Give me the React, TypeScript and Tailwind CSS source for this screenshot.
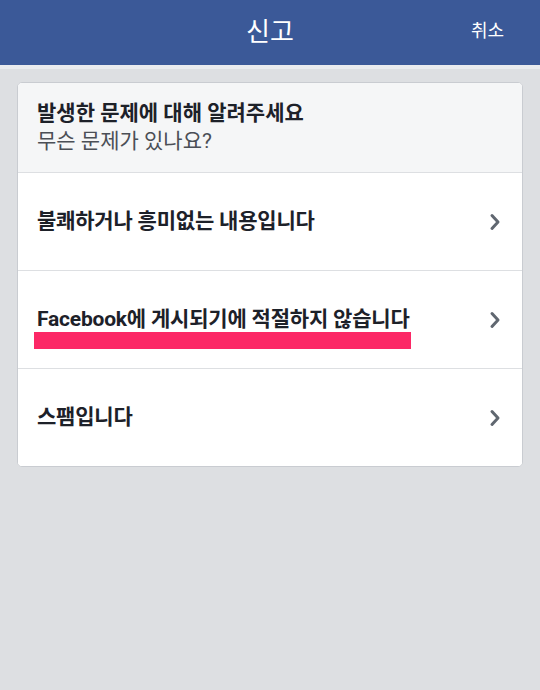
import React from 'react'

const font = { fontFamily: 'Roboto, "Noto Sans CJK KR", "Noto Sans", sans-serif' }

function Chevron() {
  return (
    <svg width="14" height="20" viewBox="0 0 14 20" className="shrink-0">
      <path d="M4 3.5 L10 10 L4 16.5" fill="none" stroke="#606770" strokeWidth="3" strokeLinecap="round" strokeLinejoin="round" />
    </svg>
  )
}

function Row({ label, mark, last }: { label: string; mark?: boolean; last?: boolean }) {
  return (
    <div className={`relative flex items-center justify-between bg-white pl-[19px] pr-[20px] ${last ? 'h-[97px]' : 'h-[98px] border-b border-[#dddfe2]'}`}>
      <span className="text-[21px] font-bold tracking-[-0.2px] text-[#1d2129]">{label}</span>
      {mark && <div className="absolute left-[16px] top-[61px] h-[17px] w-[377px] bg-[#fc2866]" />}
      <Chevron />
    </div>
  )
}

export default function App() {
  return (
    <div className="h-[690px] w-[540px] overflow-hidden bg-[#dddfe2]" style={font}>
      <div className="relative flex h-[65px] items-center justify-center bg-[#3b5998]">
        <span className="text-[26px] text-white">신고</span>
        <span className="absolute right-[36px] top-[17px] text-[18px] text-white">취소</span>
      </div>
      <div className="h-[4px] bg-[#e9ebee]" />
      <div className="mx-[17px] mt-[13px] overflow-hidden rounded-[5px] border border-[#c9ccd1] bg-white">
        <div className="h-[90px] border-b border-[#dddfe2] bg-[#f5f6f7] pl-[19px] pt-[16px]">
          <div className="text-[21px] font-bold leading-[28px] text-[#1d2129]">발생한 문제에 대해 알려주세요</div>
          <div className="text-[21px] leading-[28px] text-[#4b4f56]">무슨 문제가 있나요?</div>
        </div>
        <Row label="불쾌하거나 흥미없는 내용입니다" />
        <Row label="Facebook에 게시되기에 적절하지 않습니다" mark />
        <Row label="스팸입니다" last />
      </div>
    </div>
  )
}
